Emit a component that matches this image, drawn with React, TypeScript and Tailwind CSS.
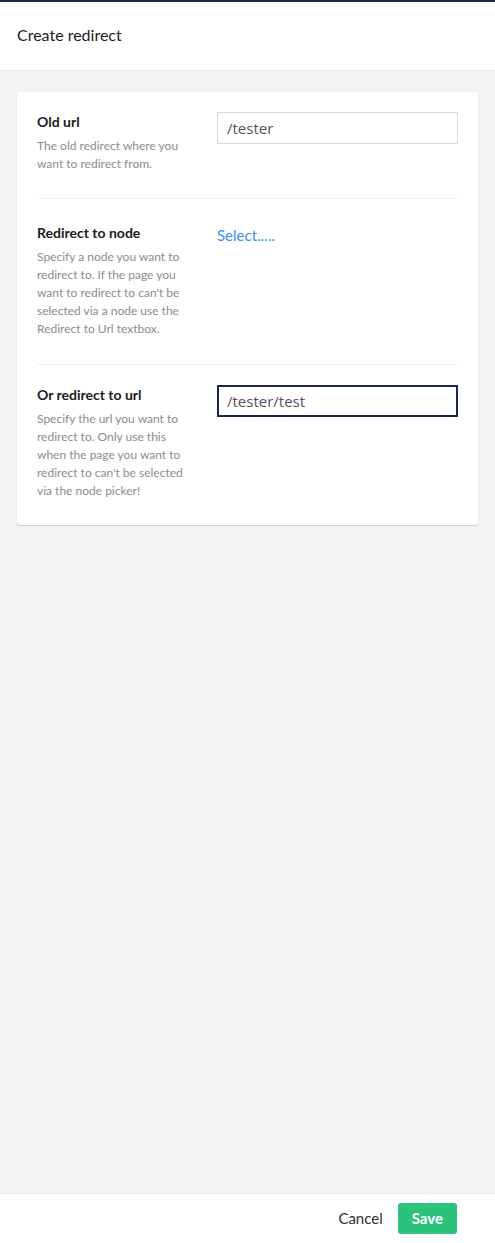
import React from "react";

interface FieldProps {
  label: string;
  description: string;
  children: React.ReactNode;
  className?: string;
}

function Field({ label, description, children, className }: FieldProps) {
  return (
    <div className={"flex gap-5 " + (className ?? "")}>
      <div className="w-[160px] shrink-0">
        <div className="text-[14px] leading-[20px] font-bold text-[#1b1b1b]">{label}</div>
        <p className="mt-[5px] text-[12px] leading-[18px] text-[#8c8c8c]">{description}</p>
      </div>
      <div className="flex-1">{children}</div>
    </div>
  );
}

export default function App() {
  return (
    <div
      className="flex h-[1243px] flex-col bg-[#f4f3f4]"
      style={{ fontFamily: "Lato, 'Open Sans', sans-serif" }}
    >
      <header className="flex h-[71px] shrink-0 items-center border-t-2 border-b border-t-[#1b264f] border-b-[#e9e9eb] bg-white px-[17px] pb-[3px]">
        <h1 className="text-[16px] text-[#1b1b1b]">Create redirect</h1>
      </header>

      <main className="flex-1 px-[17px] pt-[21px]">
        <div className="rounded-[3px] bg-white px-5 shadow-[0_1px_1px_rgba(0,0,0,0.16)]">
          <Field
            label="Old url"
            description="The old redirect where you want to redirect from."
            className="pt-5 pb-[25px] border-b border-[#f0f0f0]"
          >
            <input
              defaultValue="/tester"
              className="h-[32px] w-full border border-[#d8d7d9] px-[9px] text-[15px] text-[#555458] outline-none"
              style={{ fontFamily: "'Open Sans', sans-serif" }}
            />
          </Field>

          <Field
            label="Redirect to node"
            description="Specify a node you want to redirect to. If the page you want to redirect to can't be selected via a node use the Redirect to Url textbox."
            className="pt-[24px] pb-[26px] border-b border-[#f0f0f0]"
          >
            <a href="#" className="text-[15px] leading-[20px] text-[#3e8ef0]">
              Select.....
            </a>
          </Field>

          <Field
            label="Or redirect to url"
            description="Specify the url you want to redirect to. Only use this when the page you want to redirect to can't be selected via the node picker!"
            className="pt-[20px] pb-[25px]"
          >
            <input
              defaultValue="/tester/test"
              className="h-[32px] w-full border-2 border-[#1b264f] px-[8px] text-[15px] text-[#555458] outline-none"
              style={{ fontFamily: "'Open Sans', sans-serif" }}
            />
          </Field>
        </div>
      </main>

      <footer className="flex h-[50px] shrink-0 items-center justify-end gap-[15px] border-t border-[#e9e9eb] bg-white px-[38px]">
        <button className="text-[15px] text-[#303033]">Cancel</button>
        <button className="h-[31px] rounded-[3px] bg-[#2bc37c] px-[14px] text-[15px] font-bold text-white">
          Save
        </button>
      </footer>
    </div>
  );
}
